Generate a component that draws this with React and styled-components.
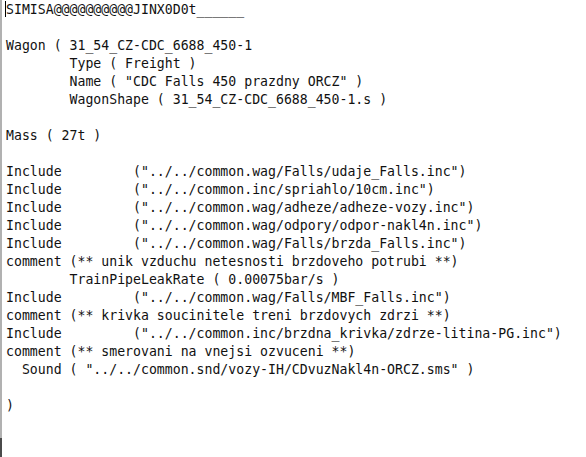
import React from 'react';
import styled, {createGlobalStyle} from 'styled-components'

const GlobalStyle = createGlobalStyle`
html, body {
  margin: 0;
  padding: 0;
  background: #fff;
}
`

const Window = styled.div`
min-height: 100vh;
box-sizing: border-box;
background: linear-gradient(to bottom, #b1b1b1 0, #b1b1b1 438px, #4a4a4a 438px) no-repeat left top / 2px 100%;
padding: 1px 0 0 6px;
`

const Editor = styled.div`
font-family: "DejaVu Sans Mono", "Liberation Mono", monospace;
font-size: 13.2px;
line-height: 18px;
color: #111;
`

const Line = styled.div`
white-space: pre;
height: 18px;
`

const Caret = styled.span`
display: inline-block;
width: 1px;
height: 16px;
margin-left: -1px;
background: #000;
vertical-align: -3px;
`

const lines = [
  'SIMISA@@@@@@@@@@JINX0D0t______',
  '',
  'Wagon ( 31_54_CZ-CDC_6688_450-1',
  '        Type ( Freight )',
  '        Name ( "CDC Falls 450 prazdny ORCZ" )',
  '        WagonShape ( 31_54_CZ-CDC_6688_450-1.s )',
  '',
  'Mass ( 27t )',
  '',
  'Include         ("../../common.wag/Falls/udaje_Falls.inc")',
  'Include         ("../../common.inc/spriahlo/10cm.inc")',
  'Include         ("../../common.wag/adheze/adheze-vozy.inc")',
  'Include         ("../../common.wag/odpory/odpor-nakl4n.inc")',
  'Include         ("../../common.wag/Falls/brzda_Falls.inc")',
  'comment (** unik vzduchu netesnosti brzdoveho potrubi **)',
  '        TrainPipeLeakRate ( 0.00075bar/s )',
  'Include         ("../../common.wag/Falls/MBF_Falls.inc")',
  'comment (** krivka soucinitele treni brzdovych zdrzi **)',
  'Include         ("../../common.inc/brzdna_krivka/zdrze-litina-PG.inc")',
  'comment (** smerovani na vnejsi ozvuceni **)',
  '  Sound ( "../../common.snd/vozy-IH/CDvuzNakl4n-ORCZ.sms" )',
  '',
  ')',
]

const App = () => {
  return (
    <>
      <GlobalStyle />
      <Window>
        <Editor>
          {lines.map((text, i) => (
            <Line key={i}>
              {i === 0 && <Caret />}
              {text}
            </Line>
          ))}
        </Editor>
      </Window>
    </>
  )
}

export default App
